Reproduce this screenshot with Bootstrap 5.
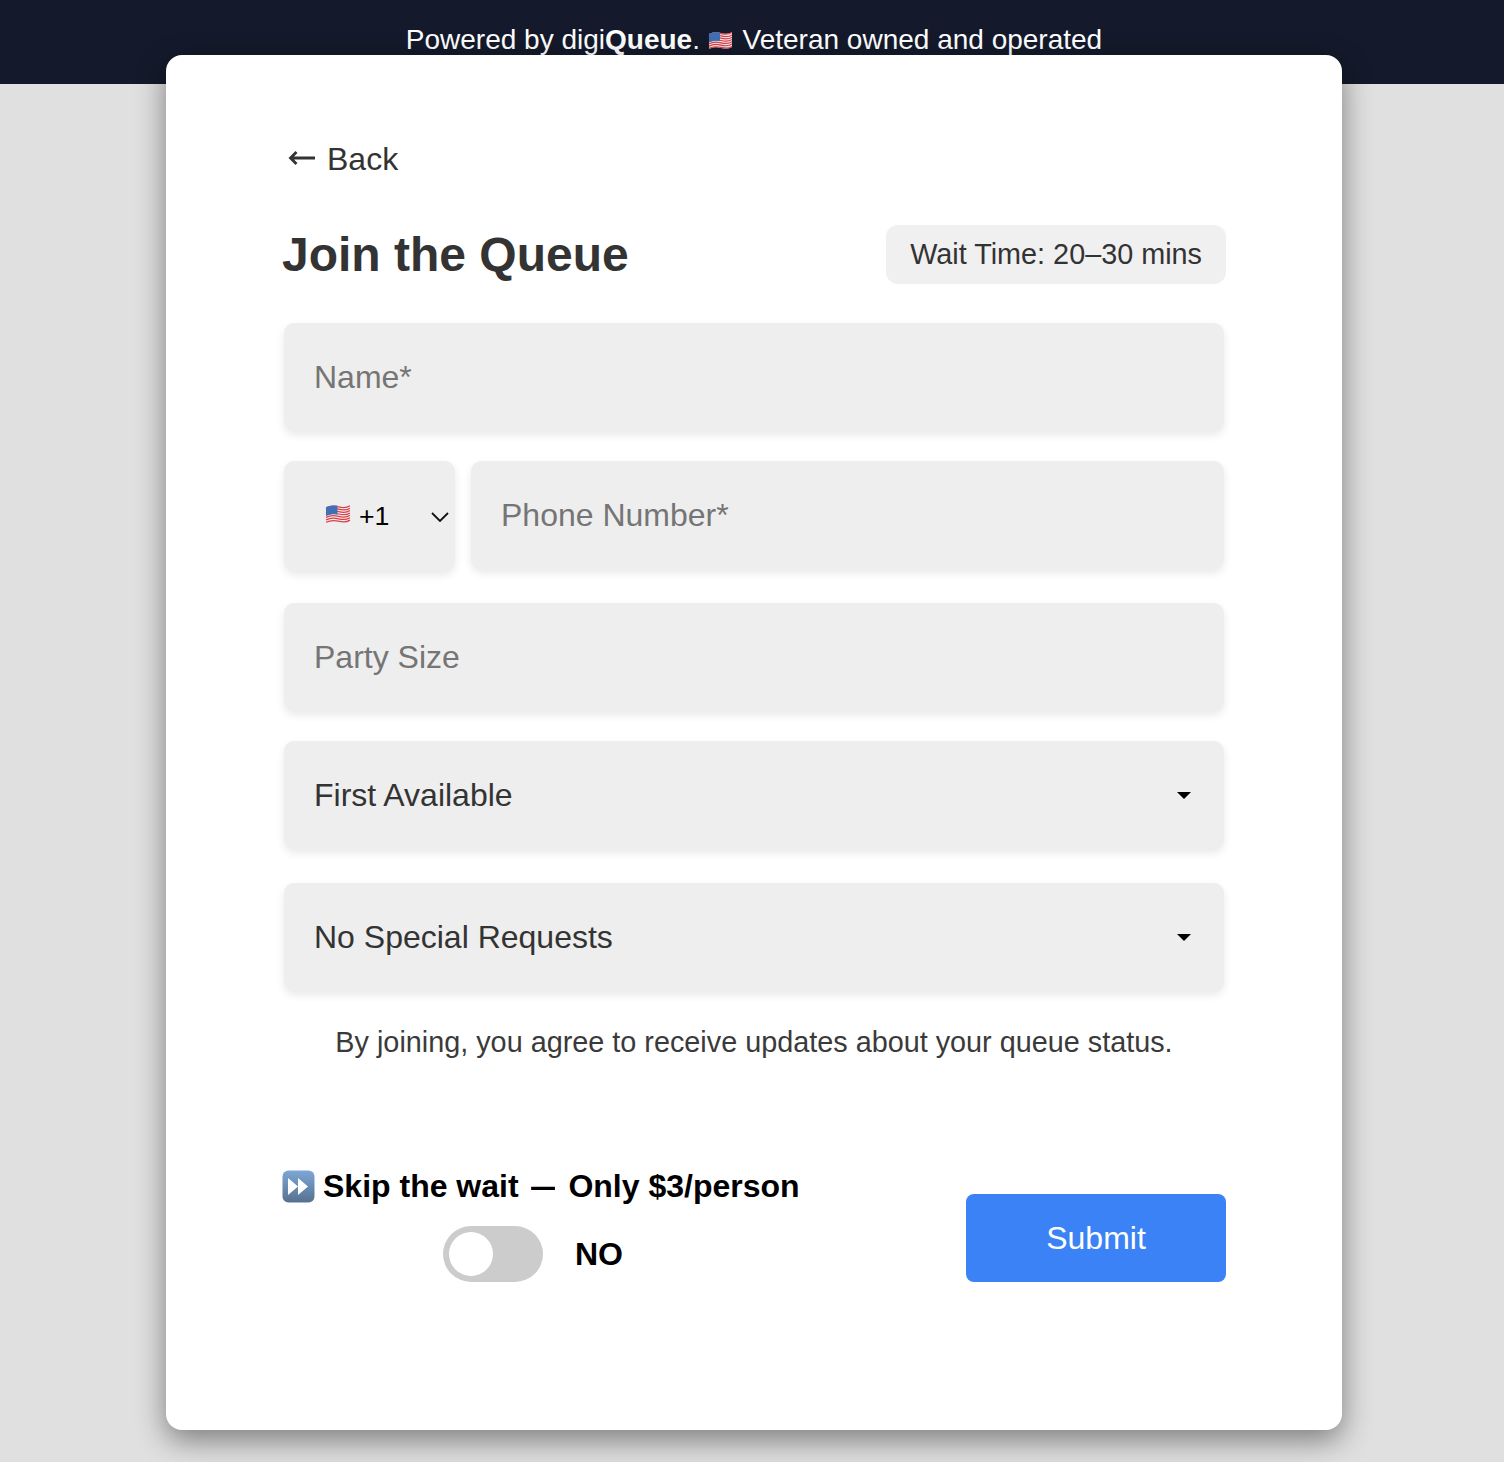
<!DOCTYPE html>
<html lang="en">
<head>
  <meta charset="UTF-8" />
  <meta name="viewport" content="width=device-width, initial-scale=1" />
  <title>Join the Queue</title>
  <link href="https://cdn.jsdelivr.net/npm/bootstrap@5.3.0/dist/css/bootstrap.min.css" rel="stylesheet">
  <style>
    body { background: #e0e0e0; font-family: "Liberation Sans", Arial, sans-serif; color: #333; min-height: 1462px; overflow: hidden; }
    .top-strip { background: #141a2b; height: 84px; color: #fff; font-size: 28px; line-height: 32px; padding-top: 24px; padding-left: 4px; }
    .top-strip .flag-a { margin-right: 2px; vertical-align: -1px; }
    .page-wrap { padding-left: 166px; margin-top: -29px; }
    .queue-card { width: 1176px; height: 1375px; background: #fff; border-radius: 16px; box-shadow: 0 10px 30px rgba(0,0,0,.45); padding: 84px 116px 0; position: relative; }
    .back-link { font-size: 32px; line-height: 40px; color: #333; text-decoration: none; padding-left: 6px; gap: 11px; }
    .back-link svg { margin-bottom: 2px; }
    .queue-title { font-size: 48px; font-weight: 700; line-height: 56px; margin: 0; color: #333; }
    .wait-pill { background: #f0f0f0; border-radius: 12px; font-size: 28.8px; line-height: 35px; padding: 12px 24px; height: 59px; white-space: nowrap; }
    .head-row { margin-top: 46px; margin-bottom: 39px; }
    .field-box.form-control, .field-box.form-select { background-color: #eee; border: 0; border-radius: 10px; height: 108px; font-size: 32px; padding: 0 30px; color: #333; box-shadow: 0 4px 8px rgba(0,0,0,.09); margin-left: 2px; width: 940px; }
    .field-box.form-control::placeholder { color: #757575; }
    .field-box.form-select { background-image: url("data:image/svg+xml,%3Csvg xmlns='http://www.w3.org/2000/svg' width='14' height='8'%3E%3Cpath d='M0 1h14L7 8z' fill='%23000'/%3E%3C/svg%3E"); background-size: 14px 8px; background-position: right 33px center; }
    .code-box { background: #eee; border-radius: 10px; width: 171px; height: 110px; box-shadow: 0 4px 8px rgba(0,0,0,.09); margin-left: 2px; font-size: 26.7px; color: #000; padding-left: 41px; padding-right: 6px; flex-shrink: 0; }
    .code-box .flag-b { margin-bottom: 5px; }
    .code-box .code-arrow { margin-top: 2px; }
    .phone-row { margin-top: 30px; margin-bottom: 32px; gap: 16px; }
    .phone-row .field-box.form-control { width: 753px; margin-left: 0; }
    .field-box.gap-field { margin-top: 30px; }
    .field-box.gap-field-lg { margin-top: 34px; }
    .terms-note { font-size: 28.8px; line-height: 36px; text-align: center; margin: 33px 0 0; color: #3a3a3a; }
    .skip-head { font-size: 32px; font-weight: 700; color: #000; line-height: 40px; gap: 8px; white-space: nowrap; }
    .skip-dash { display: inline-block; transform: scaleX(.75); }
    .switch-track { width: 100px; height: 56px; border-radius: 28px; background: #ccc; padding: 6px; }
    .switch-knob { width: 44px; height: 44px; border-radius: 50%; background: #fff; }
    .switch-label { font-size: 32px; font-weight: 700; color: #000; line-height: 40px; }
    .switch-row { gap: 32px; margin-top: 20px; padding-left: 161px; }
    .submit-btn.btn { background: #3b82f6; border: 0; color: #fff; width: 260px; height: 88px; border-radius: 8px; font-size: 32px; }
    .foot-row { margin-top: 106px; }
  </style>
</head>
<body>
  <div class="top-strip text-center">
    Powered by digi<b>Queue</b>.
    <svg width="25" height="19" viewBox="0 0 25 19" class="flag-a"><use href="#usflag"/></svg>
    Veteran owned and operated
  </div>

  <svg width="0" height="0" class="position-absolute">
    <defs>
      <linearGradient id="ffill" x1="0" y1="0" x2="0" y2="1">
        <stop offset="0" stop-color="#7ea7d6"/>
        <stop offset="1" stop-color="#56718f"/>
      </linearGradient>
      <g id="usflag">
        <path d="M1 3c4-2 8-2 12-1s8 1 11-1v15c-3 2-7 2-11 1s-8-1-12 1z" fill="#f6eeee"/>
        <g fill="none" stroke="#d8404a" stroke-width="1.200">
          <path d="M1 3.600c4-2 8-2 12-1s8 1 11-1"/>
          <path d="M1 5.900c4-2 8-2 12-1s8 1 11-1"/>
          <path d="M1 8.200c4-2 8-2 12-1s8 1 11-1"/>
          <path d="M1 10.500c4-2 8-2 12-1s8 1 11-1"/>
          <path d="M1 12.800c4-2 8-2 12-1s8 1 11-1"/>
          <path d="M1 15.100c4-2 8-2 12-1s8 1 11-1"/>
          <path d="M1 17.400c4-2 8-2 12-1s8 1 11-1"/>
        </g>
        <path d="M1 3c3-1.500 7-2 11-1.400v8.400c-4-.600-8-.100-11 1.400z" fill="#3f6fb5"/>
      </g>
    </defs>
  </svg>

  <div class="page-wrap">
    <div class="queue-card">
      <a href="#" class="back-link d-inline-flex align-items-center">
        <svg width="28" height="16" viewBox="0 0 28 16"><path d="M2 8h25M8.500 2 2.500 8l6 6" fill="none" stroke="#333" stroke-width="2.800"/></svg>
        Back
      </a>

      <div class="head-row d-flex justify-content-between align-items-center">
        <h1 class="queue-title">Join the Queue</h1>
        <div class="wait-pill">Wait Time: 20–30 mins</div>
      </div>

      <form>
        <input type="text" class="form-control field-box" placeholder="Name*">

        <div class="phone-row d-flex align-items-start">
          <div class="code-box d-flex align-items-center">
            <svg width="26" height="20" viewBox="0 0 25 19" class="me-2 flag-b"><use href="#usflag"/></svg>
            <span>+1</span>
            <svg width="18" height="10" viewBox="0 0 18 10" class="ms-auto code-arrow"><path d="M1 1l8 8 8-8" fill="none" stroke="#111" stroke-width="1.800"/></svg>
          </div>
          <input type="tel" class="form-control field-box" placeholder="Phone Number*">
        </div>

        <input type="text" class="form-control field-box" placeholder="Party Size">

        <select class="form-select field-box gap-field"><option>First Available</option></select>
        <select class="form-select field-box gap-field-lg"><option>No Special Requests</option></select>

        <p class="terms-note">By joining, you agree to receive updates about your queue status.</p>

        <div class="foot-row d-flex justify-content-between align-items-end">
          <div>
            <div class="skip-head d-flex align-items-center">
              <svg width="33" height="33" viewBox="0 0 33 33"><rect x=".5" y=".5" width="32" height="32" rx="6" fill="url(#ffill)"/><path d="M6 8l10 8.500L6 25zM16 8l10 8.500L16 25z" fill="#fff"/></svg>
              <span>Skip the wait <span class="skip-dash">—</span> Only $3/person</span>
            </div>
            <div class="switch-row d-flex align-items-center">
              <div class="switch-track"><div class="switch-knob"></div></div>
              <span class="switch-label">NO</span>
            </div>
          </div>
          <button type="button" class="btn submit-btn">Submit</button>
        </div>
      </form>
    </div>
  </div>
</body>
</html>
